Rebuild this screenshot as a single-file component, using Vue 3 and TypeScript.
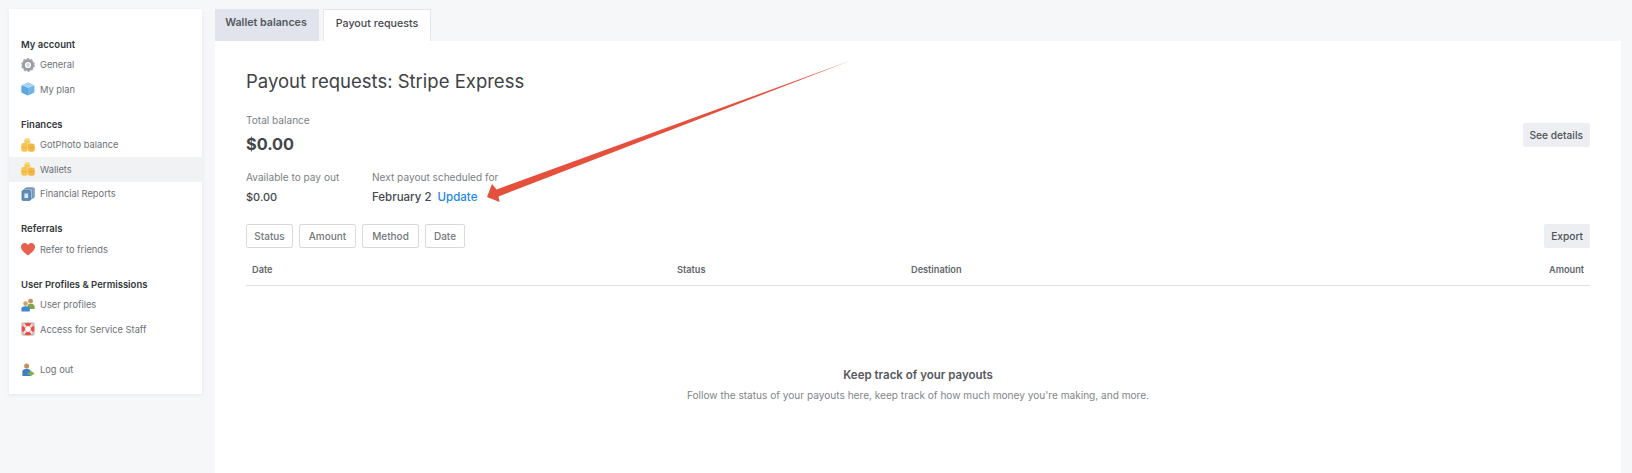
<script setup lang="ts">
interface Item { label: string; icon: string; active?: boolean }
interface Group { title: string; items: Item[] }
const groups: Group[] = [
  { title: 'My account', items: [{ label: 'General', icon: 'gear' }, { label: 'My plan', icon: 'box' }] },
  { title: 'Finances', items: [{ label: 'GotPhoto balance', icon: 'coins' }, { label: 'Wallets', icon: 'coins', active: true }, { label: 'Financial Reports', icon: 'report' }] },
  { title: 'Referrals', items: [{ label: 'Refer to friends', icon: 'heart' }] },
  { title: 'User Profiles & Permissions', items: [{ label: 'User profiles', icon: 'users' }, { label: 'Access for Service Staff', icon: 'ring' }] },
]
const filters = [
  { label: 'Status', width: 47 },
  { label: 'Amount', width: 57 },
  { label: 'Method', width: 57 },
  { label: 'Date', width: 40 },
]
</script>

<template>
  <div class="page">
    <aside class="sidebar">
      <section v-for="g in groups" :key="g.title" class="group">
        <h4 class="group-title">{{ g.title }}</h4>
        <div v-for="it in g.items" :key="it.label" class="item" :class="{ active: it.active }">
          <svg class="icon" viewBox="0 0 14 14">
            <g v-if="it.icon === 'gear'">
              <circle cx="7" cy="7" r="4.6" fill="none" stroke="#9a9c9f" stroke-width="3" />
              <circle cx="7" cy="7" r="6" fill="none" stroke="#a8aaad" stroke-width="1.8" stroke-dasharray="2.1 1.67" />
              <circle cx="7" cy="7" r="1.9" fill="#d6d7d9" />
            </g>
            <g v-else-if="it.icon === 'box'">
              <path d="M7 .6 13.4 3.4V10.4L7 13.6 .6 10.4V3.4Z" fill="#6fb3e8" />
              <path d="M7 .6 13.4 3.4 7 6.2 .6 3.4Z" fill="#a9d5f5" />
              <path d="M.6 3.4 7 6.2V13.6L.6 10.4Z" fill="#5ea7e2" />
            </g>
            <g v-else-if="it.icon === 'coins'">
              <rect x="3.2" y=".2" width="6" height="8" rx="2.4" fill="#f9d678" />
              <rect x=".2" y="5" width="6.6" height="8.8" rx="2.4" fill="#f6c452" />
              <rect x="7" y="5.4" width="6.8" height="8.4" rx="2.4" fill="#f2b845" />
              <path d="M1 9.6h5M7.8 9.6h5.2M4 3.8h4.4" stroke="#e6a52e" stroke-width=".6" />
            </g>
            <g v-else-if="it.icon === 'report'">
              <rect x="4.5" y=".8" width="8.8" height="10" rx="1" fill="#8fb0cd" stroke="#4f7ea6" stroke-width=".7" />
              <rect x="2.8" y="2" width="8.5" height="10" rx="1" fill="#b7cfe3" stroke="#4f7ea6" stroke-width=".7" />
              <rect x="1" y="3.6" width="8.5" height="9.8" rx="1" fill="#5f90b8" stroke="#3f6f98" stroke-width=".7" />
              <rect x="3.4" y="6.6" width="3.6" height="4.4" fill="#dce8f2" />
            </g>
            <path v-else-if="it.icon === 'heart'" d="M7 13.6C3.2 10.6 0 8 0 4.8 0 2.6 1.8 1 3.7 1 5.1 1 6.3 1.8 7 3 7.7 1.8 8.9 1 10.3 1 12.2 1 14 2.6 14 4.8 14 8 10.8 10.6 7 13.6Z" fill="#e5604f" />
            <g v-else-if="it.icon === 'users'">
              <circle cx="9.6" cy="3.2" r="2.4" fill="#c0935a" />
              <path d="M6.6 11V8C6.6 6.6 8 5.8 9.6 5.8S13.6 6.6 13.6 8V11Z" fill="#7fa54a" />
              <circle cx="4.6" cy="5.6" r="2.3" fill="#d3a26a" />
              <path d="M.4 13.4V10.6C.4 9 2.4 8.2 4.6 8.2S8.8 9 8.8 10.6V13.4Z" fill="#3f87cf" />
            </g>
            <g v-else-if="it.icon === 'ring'">
              <rect x=".2" y=".2" width="13.6" height="13.6" rx="2" fill="#c4c4c6" />
              <circle cx="7" cy="7" r="4.6" fill="none" stroke="#ee4b45" stroke-width="3.4" />
              <path d="M2.6 2.6 4.8 4.8M11.4 2.6 9.2 4.8M2.6 11.4 4.8 9.2M11.4 11.4 9.2 9.2" stroke="#f8dcdb" stroke-width="2.4" />
              <circle cx="7" cy="7" r="2.7" fill="#fff" />
            </g>
          </svg>
          <span>{{ it.label }}</span>
        </div>
      </section>
      <div class="item logout">
        <svg class="icon" viewBox="0 0 14 14">
          <circle cx="5.6" cy="3" r="2.5" fill="#c6925a" />
          <path d="M1.4 13V8.4C1.4 6.6 3.4 5.8 5.6 5.8S9.6 6.6 9.6 8.4V13Z" fill="#3f7fc4" />
          <path d="M6.6 9.6H9.4V7.4L13.6 10.6 9.4 13.6V11.6H6.6Z" fill="#7db53d" />
        </svg>
        <span>Log out</span>
      </div>
    </aside>

    <main class="main">
      <nav class="tabs">
        <div class="tab">Wallet balances</div>
        <div class="tab current">Payout requests</div>
      </nav>
      <div class="panel">
        <h1 class="title">Payout requests: Stripe Express</h1>
        <div class="summary">
          <div>
            <div class="muted">Total balance</div>
            <div class="total">$0.00</div>
          </div>
          <button class="soft details">See details</button>
        </div>
        <div class="stats">
          <div class="stat-a">
            <div class="muted">Available to pay out</div>
            <div class="value">$0.00</div>
          </div>
          <div>
            <div class="muted">Next payout scheduled for</div>
            <div class="value date">February 2 <a class="link">Update</a></div>
          </div>
        </div>
        <div class="toolbar">
          <div class="filters">
            <button v-for="f in filters" :key="f.label" class="filter" :style="{ width: f.width + 'px' }">{{ f.label }}</button>
          </div>
          <button class="soft">Export</button>
        </div>
        <div class="thead">
          <span class="c-date">Date</span>
          <span class="c-status">Status</span>
          <span class="c-dest">Destination</span>
          <span class="c-amt">Amount</span>
        </div>
        <div class="empty">
          <div class="empty-title">Keep track of your payouts</div>
          <div class="empty-text">Follow the status of your payouts here, keep track of how much money you're making, and more.</div>
        </div>
      </div>
    </main>

    <svg class="arrow" width="1632" height="473" viewBox="0 0 1632 473">
      <path d="M487 197 492 184 496.5 189.5 851 60.5 498.5 196.5 499.5 202Z" fill="#e5503c" />
    </svg>
  </div>
</template>

<style>
html, body { margin: 0; background: #f6f7f9; overflow: hidden; }
</style>

<style scoped>
.page {
  position: relative;
  display: flex;
  align-items: flex-start;
  gap: 13px;
  height: 473px;
  box-sizing: border-box;
  padding: 9px 11px 0 9px;
  overflow: hidden;
  font-family: Inter, "Liberation Sans", sans-serif;
  color: #3c4044;
}
.sidebar {
  flex: 0 0 193px;
  height: 385px;
  box-sizing: border-box;
  padding-top: 28.5px;
  background: #fff;
  box-shadow: 0 1px 4px rgba(40, 50, 70, 0.08);
}
.group { margin-bottom: 16px; }
.group-title {
  margin: 0 0 1px;
  padding-left: 12px;
  font-size: 9.5px;
  line-height: 14px;
  font-weight: 600;
  color: #33373b;
}
.item {
  display: flex;
  align-items: center;
  gap: 5px;
  height: 24.5px;
  padding-left: 12px;
  font-size: 9.3px;
  color: #6d7176;
}
.item.active { background: #f1f2f4; }
.logout { margin-top: 16px; }
.icon { width: 14px; height: 14px; flex: none; }
.main { flex: 1; min-width: 0; display: flex; flex-direction: column; }
.tabs { display: flex; gap: 4px; height: 32px; }
.tab {
  box-sizing: border-box;
  width: 104px;
  height: 32px;
  padding-right: 2px;
  background: #e1e4ec;
  font-size: 10.7px;
  font-weight: 600;
  line-height: 28px;
  text-align: center;
  color: #54585e;
}
.tab.current {
  width: 108px;
  padding-right: 0;
  background: #fff;
  border: 1.5px solid #e4e6ea;
  border-bottom: 0;
  line-height: 27px;
  font-weight: 500;
  color: #45494e;
}
.panel {
  height: 432px;
  box-sizing: border-box;
  padding: 29px 31px 0;
  background: #fff;
}
.title {
  margin: 0;
  font-size: 18.5px;
  line-height: 22px;
  font-weight: 400;
  color: #3e4246;
}
.muted { font-size: 10.1px; line-height: 14px; color: #7b7f84; }
.summary {
  display: flex;
  justify-content: space-between;
  align-items: flex-start;
  margin-top: 21px;
}
.total { font-size: 16.3px; line-height: 24px; font-weight: 700; margin-top: 5px; color: #42464a; }
.details { margin-top: 10px; }
.soft {
  height: 24px;
  padding: 0 7px;
  border: 0;
  border-radius: 2px;
  background: #eceef1;
  font: 500 10.2px Inter, "Liberation Sans", sans-serif;
  color: #4e5257;
}
.stats { display: flex; margin-top: 14px; }
.stat-a { width: 126px; }
.value { font-size: 11px; line-height: 16px; margin-top: 5px; font-weight: 500; color: #44484c; }
.date { font-size: 11.5px; }
.link { margin-left: 3px; color: #1e88e5; }
.toolbar {
  display: flex;
  justify-content: space-between;
  align-items: center;
  margin-top: 19px;
}
.filters { display: flex; gap: 6px; }
.filter {
  box-sizing: border-box;
  height: 24px;
  padding: 0;
  background: #fff;
  border: 1px solid #d8dadd;
  border-radius: 2px;
  font: 500 10px Inter, "Liberation Sans", sans-serif;
  color: #74787d;
}
.thead {
  display: flex;
  box-sizing: border-box;
  height: 38px;
  padding: 15px 6px 0;
  line-height: 14px;
  border-bottom: 1px solid #dddfe2;
  font-size: 9.2px;
  font-weight: 600;
  color: #63676c;
}
.c-date { width: 425px; }
.c-status { width: 234px; }
.c-dest { flex: 1; }
.empty { text-align: center; margin-top: 81px; }
.empty-title { font-size: 11.5px; line-height: 16px; font-weight: 600; color: #55595e; }
.empty-text { margin-top: 5px; font-size: 10.1px; line-height: 14px; color: #818589; }
.arrow { position: absolute; left: 0; top: 0; pointer-events: none; }
</style>
